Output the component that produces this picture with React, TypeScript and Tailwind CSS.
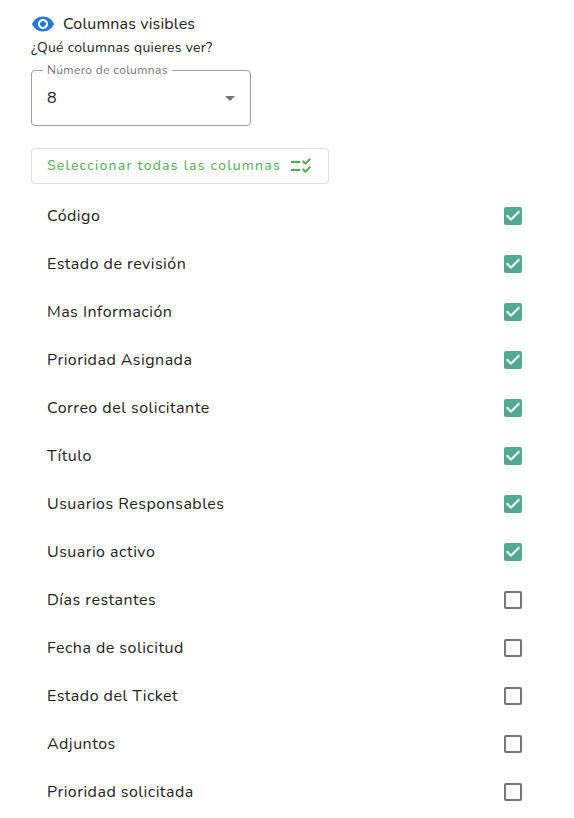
import { useState } from 'react';
import { MdArrowDropDown, MdChecklistRtl, MdVisibility } from 'react-icons/md';

interface Column {
  id: string;
  label: string;
  visible: boolean;
}

const initialColumns: Column[] = [
  { id: 'codigo', label: 'Código', visible: true },
  { id: 'estado_revision', label: 'Estado de revisión', visible: true },
  { id: 'mas_informacion', label: 'Mas Información', visible: true },
  { id: 'prioridad_asignada', label: 'Prioridad Asignada', visible: true },
  { id: 'correo_solicitante', label: 'Correo del solicitante', visible: true },
  { id: 'titulo', label: 'Título', visible: true },
  { id: 'usuarios_responsables', label: 'Usuarios Responsables', visible: true },
  { id: 'usuario_activo', label: 'Usuario activo', visible: true },
  { id: 'dias_restantes', label: 'Días restantes', visible: false },
  { id: 'fecha_solicitud', label: 'Fecha de solicitud', visible: false },
  { id: 'estado_ticket', label: 'Estado del Ticket', visible: false },
  { id: 'adjuntos', label: 'Adjuntos', visible: false },
  { id: 'prioridad_solicitada', label: 'Prioridad solicitada', visible: false }
];

interface ColumnRowProps {
  column: Column;
  onToggle: (id: string) => void;
}

const ColumnRow = ({ column, onToggle }: ColumnRowProps) => (
  <li className="flex h-12 items-center justify-between pl-4 pr-[21px]">
    <label htmlFor={column.id} className="flex-1 cursor-pointer text-base tracking-[0.03em]">
      {column.label}
    </label>
    <span className="relative flex size-[18px]">
      <input
        id={column.id}
        type="checkbox"
        checked={column.visible}
        onChange={() => onToggle(column.id)}
        className="size-[18px] cursor-pointer appearance-none rounded-xs border-2 border-[#757575] checked:border-[#53a990] checked:bg-[#53a990]"
      />
      {column.visible && (
        <svg viewBox="3 3 18 18" className="pointer-events-none absolute inset-0 size-[18px] fill-white">
          <path d="M10 17l-5-5 1.41-1.41L10 14.17l7.59-7.59L19 8l-9 9z" />
        </svg>
      )}
    </span>
  </li>
);

const App = () => {
  const [columns, setColumns] = useState(initialColumns);
  const visibleCount = columns.filter(c => c.visible).length;

  const toggleColumn = (id: string) => {
    setColumns(prev => prev.map(c => (c.id === id ? { ...c, visible: !c.visible } : c)));
  };

  const showFirst = (count: number) => {
    setColumns(prev => prev.map((c, i) => ({ ...c, visible: i < count })));
  };

  return (
    <main className="min-h-screen border-r border-[#fafafa] bg-white pl-[31px] pr-[30px] pt-3 font-['Nunito','Lato',sans-serif] text-[#212121]">
      <div className="flex items-center gap-2">
        <MdVisibility size={24} className="text-[#2479d5]" />
        <h1 className="text-base tracking-[0.01em]">Columnas visibles</h1>
      </div>
      <p className="text-sm leading-6 tracking-[0.02em]">¿Qué columnas quieres ver?</p>

      <fieldset className="relative mt-1 h-[62px] w-[220px] rounded-sm border border-[#9e9e9e] pl-[11px]">
        <legend className="px-1 text-xs leading-3 tracking-[0.03em] text-[#757575]">
          <label htmlFor="column-count">Número de columnas</label>
        </legend>
        <select
          id="column-count"
          value={visibleCount}
          onChange={e => showFirst(Number(e.target.value))}
          className="h-11 w-full cursor-pointer appearance-none px-1 text-base outline-none"
        >
          {columns.map((c, i) => (
            <option key={c.id} value={i + 1}>{i + 1}</option>
          ))}
        </select>
        <MdArrowDropDown size={24} className="pointer-events-none absolute right-2 top-2.5 text-[#757575]" />
      </fieldset>

      <button
        type="button"
        onClick={() => showFirst(columns.length)}
        className="mt-[22px] flex h-9 cursor-pointer items-center gap-2 rounded-sm border border-[#e0e0e0] px-[15px] text-sm tracking-[0.09em] text-[#4caf50]"
      >
        Seleccionar todas las columnas
        <MdChecklistRtl size={24} />
      </button>

      <ul className="pt-2">
        {columns.map(column => (
          <ColumnRow key={column.id} column={column} onToggle={toggleColumn} />
        ))}
      </ul>
    </main>
  );
};

export default App;
